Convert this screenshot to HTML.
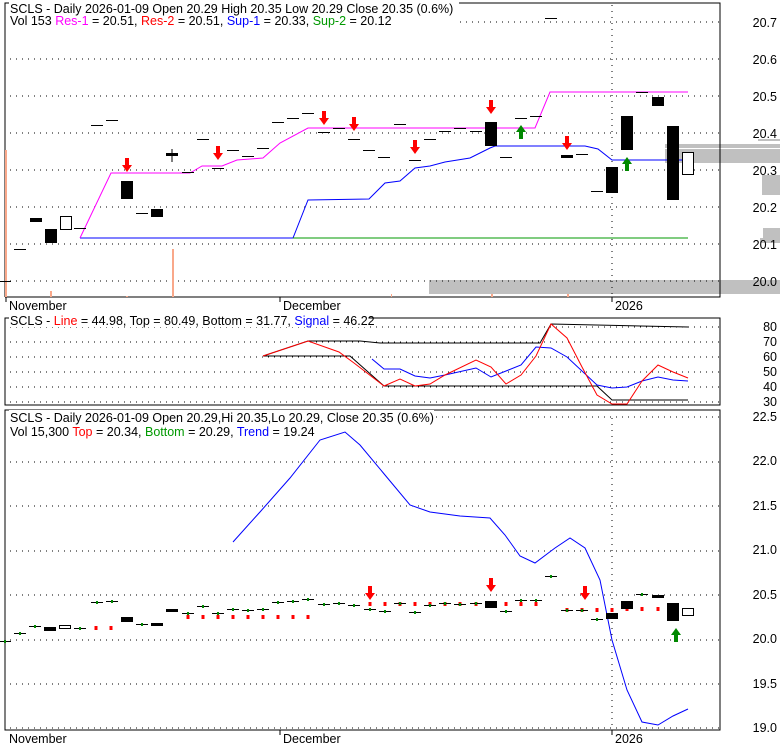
<!DOCTYPE html>
<html><head><meta charset="utf-8"><style>
body{margin:0;background:#fff;width:780px;height:745px;overflow:hidden}
svg{display:block;font-family:"Liberation Sans",sans-serif;font-size:12px}
</style></head><body>
<svg id="s" width="780" height="745" xmlns="http://www.w3.org/2000/svg">
<g id="g"></g>
<g font-size="12.5">
<rect x="9" y="2" width="450" height="26" fill="#fff"/>
<rect x="9" y="313" width="360" height="14" fill="#fff"/>
<rect x="9" y="410" width="425" height="14" fill="#fff"/>
<rect x="9" y="424" width="308" height="13" fill="#fff"/>
<text x="10" y="13">SCLS - Daily 2026-01-09 Open 20.29  High 20.35  Low 20.29  Close 20.35 (0.6%)</text>
<text x="10" y="25">Vol 153 <tspan fill="#f0f">Res-1</tspan> = 20.51, <tspan fill="#f00">Res-2</tspan> = 20.51, <tspan fill="#00f">Sup-1</tspan> = 20.33, <tspan fill="#090">Sup-2</tspan> = 20.12</text>
<text x="10" y="325">SCLS - <tspan fill="#f00">Line</tspan> = 44.98, Top = 80.49, Bottom = 31.77, <tspan fill="#00f">Signal</tspan> = 46.22</text>
<text x="10" y="422">SCLS - Daily 2026-01-09 Open 20.29,Hi 20.35,Lo 20.29, Close 20.35 (0.6%)</text>
<text x="10" y="436">Vol 15,300 <tspan fill="#f00">Top</tspan> = 20.34, <tspan fill="#090">Bottom</tspan> = 20.29, <tspan fill="#00f">Trend</tspan> = 19.24</text>
</g>
<g font-size="12.5" text-anchor="end">
<text x="777" y="27">20.7</text><text x="777" y="64">20.6</text><text x="777" y="101">20.5</text><text x="777" y="138">20.4</text><text x="777" y="175">20.3</text><text x="777" y="212">20.2</text><text x="777" y="249">20.1</text><text x="777" y="286">20.0</text>
<text x="777" y="331">80</text><text x="777" y="346">70</text><text x="777" y="361">60</text><text x="777" y="376">50</text><text x="777" y="391">40</text><text x="777" y="406">30</text>
<text x="777" y="421">22.5</text><text x="777" y="465">22.0</text><text x="777" y="510">21.5</text><text x="777" y="554">21.0</text><text x="777" y="599">20.5</text><text x="777" y="643">20.0</text><text x="777" y="688">19.5</text><text x="777" y="732">19.0</text>
</g>
<g font-size="12.5">
<text x="9" y="310">November</text><text x="283" y="310">December</text><text x="615" y="310">2026</text>
<text x="9" y="743">November</text><text x="283" y="743">December</text><text x="615" y="743">2026</text>
</g>
</svg>
<script>
var g=document.getElementById('g'),h='';
function L(a,c,w){h+='<polyline fill="none" stroke="'+c+'" stroke-width="'+(w||1)+'" points="'+a+'"/>';}
function R(x,y,w,hh,f,s){h+='<rect x="'+x+'" y="'+y+'" width="'+w+'" height="'+hh+'" fill="'+f+'"'+(s?' stroke="'+s+'"':'')+'/>';}
function D(y,x1,x2){h+='<line x1="'+x1+'" x2="'+x2+'" y1="'+y+'" y2="'+y+'" stroke="#000" stroke-dasharray="1,5"/>';}
function V(x,y1,y2){h+='<line x1="'+x+'" x2="'+x+'" y1="'+y1+'" y2="'+y2+'" stroke="#000" stroke-dasharray="1,5"/>';}
function arr(x,y,c,up){
 if(!up) h+='<path d="M'+(x-2)+' '+(y-14)+'h4v7h3l-5 7l-5-7h3z" fill="'+c+'"/>';
 else h+='<path d="M'+(x-2)+' '+(y+14)+'h4v-7h3l-5-7l-5 7h3z" fill="'+c+'"/>';}
R(429,280,351,14,'#c0c0c0');R(665,149,115,14,'#c0c0c0');R(665,144,115,4,'#c0c0c0');R(758,139,22,2,'#c0c0c0');R(762,175,18,20,'#c0c0c0');R(763,228,17,10,'#c0c0c0');R(760,238,20,5,'#c0c0c0');
[22,59,96,133,170,207,244,281].forEach(function(y){D(y,10,720)});V(612,5,297);
[327,342,357,372,387,402].forEach(function(y){D(y,10,720)});
[417,462,506,551,595,640,684,728].forEach(function(y){D(y,10,720)});V(612,418,728);
h+='<path d="M5 297V3h5M5 297H720V3H10" fill="none" stroke="#000"/>';
h+='<line x1="280" y1="297" x2="280" y2="302" stroke="#000"/><line x1="612" y1="297" x2="612" y2="302" stroke="#000"/><line x1="6" y1="297" x2="6" y2="302" stroke="#000"/>';
h+='<path d="M5 318H720V405H5z" fill="none" stroke="#000"/>';
h+='<path d="M5 410H720V730H5z" fill="none" stroke="#000"/>';
h+='<line x1="280" y1="730" x2="280" y2="735" stroke="#000"/><line x1="612" y1="730" x2="612" y2="735" stroke="#000"/>';
R(5,150,2,147,'#f9a88a');R(50,291,2,6,'#f9a88a');R(126,296,2,1,'#f9a88a');R(172,249,2,48,'#f9a88a');R(491,294,2,3,'#f9a88a');R(567,294,2,3,'#f9a88a');R(391,294,1,3,'#f9a88a');
L('80,238 293,238 308,200 369,199 385,183 400,181 415,168 430,166 445,162 470,158 490,148 495,146 585,146 598,149 612,160 688,160','#00f');
L('293,238 688,238','#090');
L('80,238 111,173 190,173 202,166 222,166 237,160 263,158 280,143 308,128 535,128 550,92 688,92','#f0f');
var c1=[[5,281,281,'d'],[20,249,249,'d'],[36,218,222,'b'],[51,229,243,'b'],[66,216,229,'w'],[80,228,228,'d'],[97,125,125,'d'],[112,120,120,'d'],[127,181,199,'b'],[142,213,213,'d'],[157,209,217,'b'],[172,153,156,'b'],[188,172,172,'d'],[203,139,139,'d'],[218,168,168,'d'],[233,150,150,'d'],[248,156,156,'d'],[263,148,148,'d'],[278,122,122,'d'],[293,118,118,'d'],[308,113,113,'d'],[324,132,132,'d'],[339,128,128,'d'],[354,139,139,'d'],[369,150,150,'d'],[384,157,157,'d'],[400,124,124,'d'],[415,160,160,'d'],[430,139,139,'d'],[445,131,131,'d'],[460,128,128,'d'],[476,131,131,'d'],[491,122,146,'b'],[506,157,157,'d'],[521,118,118,'d'],[536,116,116,'d'],[551,18,18,'d'],[567,155,158,'b'],[582,154,154,'d'],[597,191,191,'d'],[612,167,193,'b'],[627,116,150,'b'],[642,92,92,'d'],[658,97,106,'b'],[673,126,200,'b'],[688,152,174,'w']];
function candles(c){c.forEach(function(k){var x=k[0];
 if(k[3]=='d'){R(x-6,k[1],12,1,'#000');}
 else if(k[3]=='b'){R(x-6,k[1],12,Math.max(k[2]-k[1],3),'#000');}
 else {R(x-5.5,k[1]+.5,11,k[2]-k[1],'#fff','#000');}});}
candles(c1);
h+='<line x1="172" y1="149" x2="172" y2="162" stroke="#000"/>';
arr(127,172,'#f00');arr(218,160,'#f00');arr(324,125,'#f00');arr(354,131,'#f00');arr(415,154,'#f00');arr(491,114,'#f00');arr(567,150,'#f00');
arr(521,125,'#080',1);arr(627,157,'#080',1);
L('263,356 308,341 360,341 380,343 540,343 551,324 688,327','#000');
L('263,356 350,356 384,386 597,386 612,400 688,400','#000');
L('372,359 384,369 400,369 415,376 430,378 445,375 476,368 491,377 506,371 521,365 536,347 551,348 567,357 597,385 612,388 627,387 642,381 658,377 673,380 688,381','#00f');
L('263,356 308,341 339,352 354,363 384,386 400,379 415,386 430,384 445,375 476,360 491,367 506,384 521,375 536,356 551,324 567,338 582,367 597,395 612,404 627,404 642,381 658,365 673,372 688,378','#f00');
L('233,542 260,512 290,478 320,440 345,432 360,445 385,475 410,505 430,512 460,516 490,518 505,535 520,556 535,563 555,548 570,538 585,548 600,580 612,640 627,690 642,722 658,725 673,716 688,709','#00f');
function rd(y,xs){xs.forEach(function(x){R(x-1.5,y-2,3,4,'#f00')})}
rd(628,[96,111]);rd(617,[188,203,218,233,248,263,278,293,308]);
rd(604,[370,385,400,415,430,445,460,476,506,521,536]);rd(610,[567,582,597,612]);rd(609,[627,642,658]);
var c3=[[5,641,641,'d'],[20,633,633,'d'],[35,626,626,'d'],[50,627,631,'b'],[65,625,628,'w'],[80,628,628,'d'],[97,602,602,'d'],[112,601,601,'d'],[127,617,622,'b'],[142,624,624,'d'],[157,623,626,'b'],[172,609,611,'b'],[188,613,613,'d'],[203,606,606,'d'],[218,613,613,'d'],[233,609,609,'d'],[248,610,610,'d'],[263,609,609,'d'],[278,602,602,'d'],[293,601,601,'d'],[308,599,599,'d'],[324,604,604,'d'],[339,603,603,'d'],[354,605,605,'d'],[370,609,609,'d'],[385,611,611,'d'],[400,603,603,'d'],[415,612,612,'d'],[430,605,605,'d'],[445,603,603,'d'],[460,604,604,'d'],[476,603,603,'d'],[491,601,608,'b'],[506,611,611,'d'],[521,600,600,'d'],[536,600,600,'d'],[551,576,576,'d'],[567,610,610,'d'],[582,610,610,'d'],[597,619,619,'d'],[612,613,619,'b'],[627,601,609,'b'],[642,594,594,'d'],[658,595,598,'b'],[673,603,621,'b'],[688,608,615,'w']];
candles(c3);
c3.forEach(function(k){if(k[3]=='d')R(k[0]-1,k[1]-1,2,3,'#080')});
arr(370,600,'#f00');arr(491,592,'#f00');arr(585,600,'#f00');arr(676,628,'#080',1);
g.innerHTML=h;
</script>
</body></html>
